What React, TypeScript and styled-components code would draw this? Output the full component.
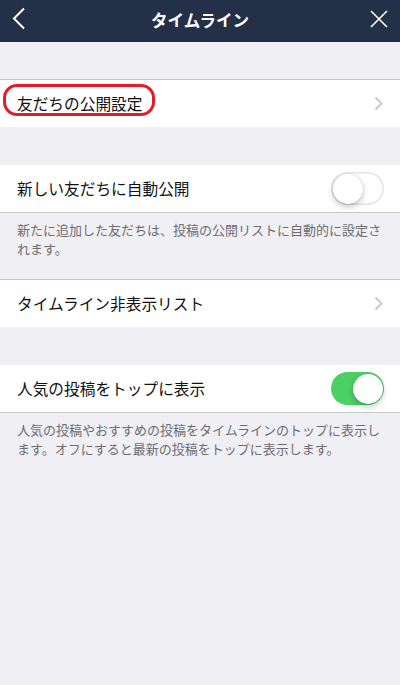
import React from "react";
import styled, { createGlobalStyle } from "styled-components";

const Global = createGlobalStyle`
  html, body { margin: 0; padding: 0; background: #efeff4; }
  body { font-family: "Noto Sans CJK JP", "Noto Sans", sans-serif; -webkit-font-smoothing: antialiased; }
  * { box-sizing: border-box; }
`;

const Page = styled.div`
  width: 400px;
  min-height: 685px;
  background: #efeff4;
  display: flex;
  flex-direction: column;
`;

const Header = styled.header`
  height: 42px;
  background: #243047;
  display: flex;
  align-items: center;
  justify-content: space-between;
  padding: 0 10px 0 8px;
  position: relative;
`;

const Title = styled.h1`
  position: absolute;
  left: 0;
  right: 0;
  top: 0;
  margin: 0;
  line-height: 40px;
  text-align: center;
  color: #fff;
  font-size: 16.5px;
  font-weight: 700;
  pointer-events: none;
`;

const IconButton = styled.button`
  background: none;
  border: 0;
  padding: 0;
  display: flex;
  align-items: center;
  justify-content: center;
  width: 22px;
  height: 30px;
  margin-top: -4px;
`;

const Spacer = styled.div<{ $h: number }>`
  height: ${(p) => p.$h}px;
`;

const Row = styled.div<{ $top?: boolean; $bottom?: boolean }>`
  height: 48px;
  background: #fff;
  display: flex;
  align-items: center;
  justify-content: space-between;
  padding: 0 17px 0 17px;
  border-top: ${(p) => (p.$top ? "1px solid #c8c7cc" : "none")};
  border-bottom: ${(p) => (p.$bottom ? "1px solid #c8c7cc" : "none")};
`;

const Label = styled.span`
  font-size: 15.7px;
  color: #111;
  letter-spacing: 0;
  position: relative;
`;

const Circle = styled.span`
  position: absolute;
  left: -14px;
  top: -8px;
  width: 152px;
  height: 32px;
  border: 3.5px solid #e21d2a;
  border-radius: 14px;
`;

const Footer = styled.p`
  margin: 0;
  padding: 7px 17px 21px;
  font-size: 13px;
  line-height: 19px;
  color: #6d6d72;
`;

const Track = styled.span<{ $on: boolean }>`
  width: 53px;
  height: 33px;
  border-radius: 17px;
  position: relative;
  display: inline-block;
  margin-right: -1px;
  background: ${(p) => (p.$on ? "#4bd063" : "#fff")};
  box-shadow: ${(p) => (p.$on ? "none" : "inset 0 0 0 1.5px #e4e4e8")};
`;

const Knob = styled.span<{ $on: boolean }>`
  position: absolute;
  top: 1.5px;
  left: ${(p) => (p.$on ? "21.5px" : "1.5px")};
  width: 30px;
  height: 30px;
  border-radius: 50%;
  background: #fff;
  box-shadow: 0 3px 6px rgba(0, 0, 0, 0.22), 0 0 0 0.5px rgba(0, 0, 0, 0.12);
`;

const Toggle = ({ on }: { on: boolean }) => (
  <Track $on={on}>
    <Knob $on={on} />
  </Track>
);

const Chevron = () => (
  <svg width="9" height="15" viewBox="0 0 9 15">
    <path d="M1.5 1.5 L7.5 7.5 L1.5 13.5" fill="none" stroke="#c7c7cc" strokeWidth="1.8" />
  </svg>
);

export default function App() {
  return (
    <Page>
      <Global />
      <Header>
        <IconButton aria-label="back">
          <svg width="14" height="24" viewBox="0 0 14 24">
            <path d="M12 1.5 L2 11.5 L12 21.5" fill="none" stroke="#fff" strokeWidth="2" />
          </svg>
        </IconButton>
        <Title>タイムライン</Title>
        <IconButton aria-label="close">
          <svg width="18" height="18" viewBox="0 0 18 18">
            <path d="M1 1 L17 17 M17 1 L1 17" fill="none" stroke="#fff" strokeWidth="1.6" />
          </svg>
        </IconButton>
      </Header>
      <Spacer $h={37} />
      <Row $top>
        <Label>
          <Circle />
          友だちの公開設定
        </Label>
        <Chevron />
      </Row>
      <Spacer $h={38} />
      <Row $bottom>
        <Label>新しい友だちに自動公開</Label>
        <Toggle on={false} />
      </Row>
      <Footer>
        新たに追加した友だちは、投稿の公開リストに自動的に設定されます。
      </Footer>
      <Row $top>
        <Label>タイムライン非表示リスト</Label>
        <Chevron />
      </Row>
      <Spacer $h={38} />
      <Row $bottom>
        <Label>人気の投稿をトップに表示</Label>
        <Toggle on />
      </Row>
      <Footer>
        人気の投稿やおすすめの投稿をタイムラインのトップに表示します。オフにすると最新の投稿をトップに表示します。
      </Footer>
    </Page>
  );
}
